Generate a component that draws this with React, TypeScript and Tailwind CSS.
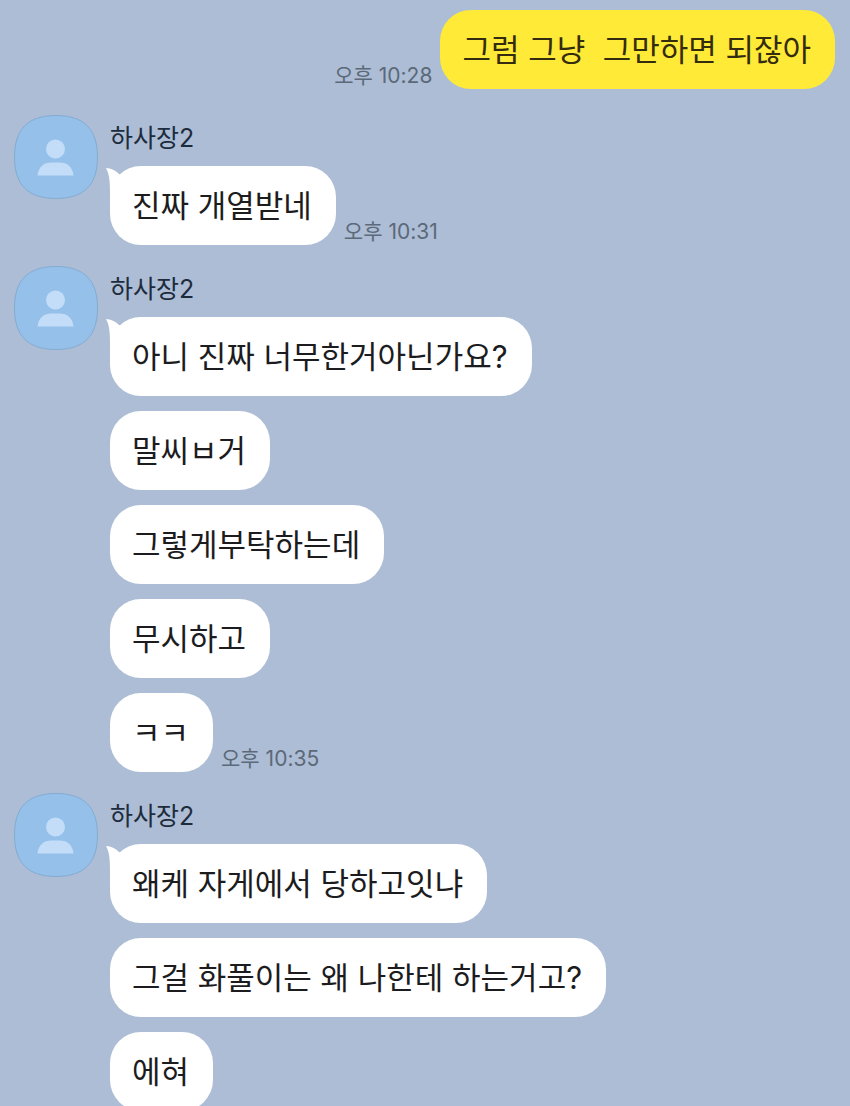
import React from 'react';

type Message = {
  text: string;
  time?: string;
};

type MessageGroup = {
  sender: string;
  messages: Message[];
};

const groups: MessageGroup[] = [
  {
    sender: '하사장2',
    messages: [{ text: '진짜 개열받네', time: '오후 10:31' }],
  },
  {
    sender: '하사장2',
    messages: [
      { text: '아니 진짜 너무한거아닌가요?' },
      { text: '말씨ㅂ거' },
      { text: '그렇게부탁하는데' },
      { text: '무시하고' },
      { text: 'ㅋㅋ', time: '오후 10:35' },
    ],
  },
  {
    sender: '하사장2',
    messages: [
      { text: '왜케 자게에서 당하고잇냐' },
      { text: '그걸 화풀이는 왜 나한테 하는거고?' },
      { text: '에혀' },
    ],
  },
];

const Avatar = () => (
  <svg viewBox="0 0 84 84" className="w-21 h-21 shrink-0" aria-hidden="true">
    <path
      d="M42 .5C70 .5 83.500 14 83.500 42S70 83.500 42 83.500.5 70 .5 42 14 .5 42 .5Z"
      fill="#94c0e9"
      stroke="#83acd2"
    />
    <circle cx="41.500" cy="34" r="9.500" fill="#c3dcf8" />
    <path d="M23.500 60.500C24.500 51.500 30 47.500 37 47.500H46C53 47.500 58.500 51.500 59.500 60.500Z" fill="#c3dcf8" />
  </svg>
);

// small pointer on the first bubble of a group
const Tail = () => (
  <svg viewBox="0 0 24 30" className="absolute -left-1 top-0 w-6 h-[30px]" aria-hidden="true">
    <path d="M0 2C5 2 9.500 4.500 13 8L20 12V30H4C4 18 4 9 0 2Z" fill="#ffffff" />
  </svg>
);

const Time = ({ children }: { children: React.ReactNode }) => (
  <time className="pb-px text-[21px] leading-6 text-[#5b6979] whitespace-nowrap">{children}</time>
);

const Bubble = ({ text, mine, tail }: { text: string; mine?: boolean; tail?: boolean }) => (
  <div
    className={`relative rounded-[31px] pl-[22px] pr-6 py-4 text-[31px] leading-[47px] whitespace-pre-wrap ${
      mine ? 'bg-[#ffea37] text-[#332c0e]' : 'bg-white text-[#1c1c1e]'
    }`}
  >
    {tail && <Tail />}
    <p className="relative">{text}</p>
  </div>
);

const Group = ({ sender, messages }: MessageGroup) => (
  <section className="flex gap-3">
    <Avatar />
    <div className="min-w-0">
      <h2 className="h-[51px] pt-[5px] text-[25px] leading-9 text-[#1d2c3d]">{sender}</h2>
      <ul className="flex flex-col gap-[15px]">
        {messages.map((message, index) => (
          <li key={index} className="flex items-end gap-2">
            <Bubble text={message.text} tail={index === 0} />
            {message.time && <Time>{message.time}</Time>}
          </li>
        ))}
      </ul>
    </div>
  </section>
);

const App = () => {
  return (
    <main className="h-screen overflow-hidden bg-[#adbdd5] pl-3.5 pr-[15px] pt-2.5 font-[Inter,'Noto_Sans_CJK_KR',sans-serif]">
      <div className="flex items-end justify-end gap-2">
        <Time>오후 10:28</Time>
        <Bubble text="그럼 그냥  그만하면 되잖아" mine />
      </div>
      <div className="mt-[26px] flex flex-col gap-[21px]">
        {groups.map((group, index) => (
          <Group key={index} {...group} />
        ))}
      </div>
    </main>
  );
};

export default App;
